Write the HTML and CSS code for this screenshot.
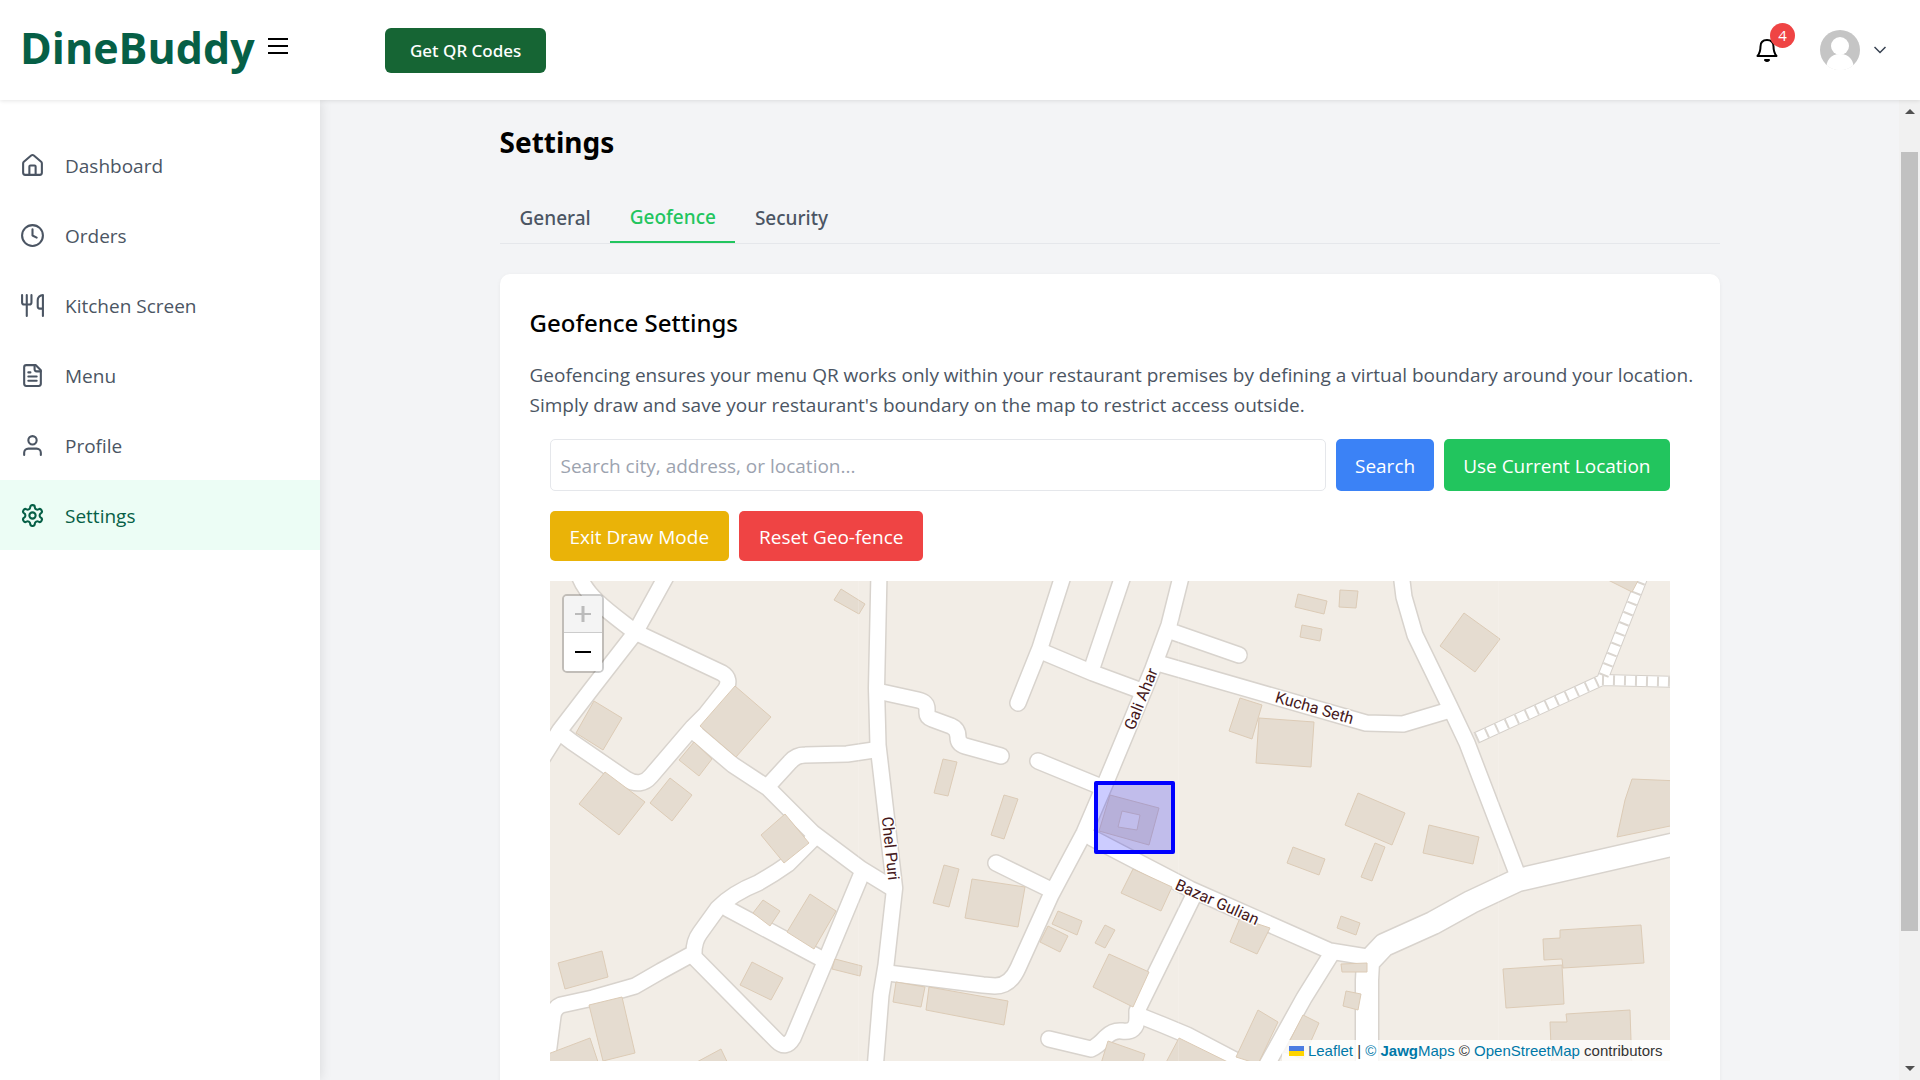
FILE: index.html
```html
<!DOCTYPE html>
<html lang="en">
<head>
<meta charset="utf-8">
<meta name="viewport" content="width=device-width, initial-scale=1">
<title>DineBuddy – Settings</title>
<link rel="stylesheet" href="styles.css">
</head>
<body>
<header class="topbar">
  <div class="brand">
    <span class="logo">DineBuddy</span>
    <button class="icon-btn menu-btn" type="button" aria-label="Toggle menu">
      <svg width="20" height="16" viewBox="0 0 20 16" stroke="currentColor" stroke-width="2"><path d="M0 1h20M0 8h20M0 15h20"/></svg>
    </button>
  </div>
  <button class="qr-btn" type="button">Get QR Codes</button>
  <div class="account">
    <button class="icon-btn bell-btn" type="button" aria-label="Notifications, 4 unread">
      <svg width="24" height="26" viewBox="0 0 24 26" fill="none" stroke="currentColor" stroke-width="2" stroke-linecap="round" stroke-linejoin="round"><path d="M2.500 19C5 16 5.500 13 5.500 9.500 5.500 5.500 8 3 12 3s6.500 2.500 6.500 6.500c0 3.500.5 6.500 3 9.500Z"/><path d="M10 23q2 2 4 0Z"/></svg>
      <span class="badge">4</span>
    </button>
    <button class="icon-btn user-btn" type="button" aria-label="Account">
      <svg width="40" height="40" viewBox="0 0 40 40"><defs><clipPath id="disc"><circle cx="20" cy="20" r="20"/></clipPath></defs><g clip-path="url(#disc)"><path fill="#c5c5c5" d="M0 0h40v40H0z"/><circle cx="20" cy="16" r="9" fill="#fff"/><path fill="#fff" d="M6 40c0-9 4-16 14-16s14 7 14 16z"/><path fill="#fff" d="M0 35h40v5H0z"/></g></svg>
      <svg class="chevron" width="12" height="8" viewBox="0 0 12 8" fill="none" stroke="currentColor" stroke-width="1.500"><path d="M.5 1 6 6.500 11.500 1"/></svg>
    </button>
  </div>
</header>

<div class="shell">
  <nav class="sidebar" aria-label="Main">
    <a class="nav-item" href="#"><svg class="nav-icon" viewBox="0 0 24 24"><path d="M15 21v-8a1 1 0 0 0-1-1h-4a1 1 0 0 0-1 1v8"/><path d="M3 10a2 2 0 0 1 .709-1.528l7-5.999a2 2 0 0 1 2.582 0l7 5.999A2 2 0 0 1 21 10v9a2 2 0 0 1-2 2H5a2 2 0 0 1-2-2z"/></svg>Dashboard</a>
    <a class="nav-item" href="#"><svg class="nav-icon" viewBox="0 0 24 24"><circle cx="12" cy="12" r="10"/><path d="M12 6v6l4 2"/></svg>Orders</a>
    <a class="nav-item" href="#"><svg class="nav-icon" viewBox="0 0 24 24"><path d="M2 2v7c0 1.100.9 2 2 2h5a2 2 0 0 0 2-2V2M6.500 2v20M22 15V2a5 5 0 0 0-5 5v6c0 1.100.9 2 2 2h3Zm0 0v7"/></svg>Kitchen Screen</a>
    <a class="nav-item" href="#"><svg class="nav-icon" viewBox="0 0 24 24"><path d="M15 2H6a2 2 0 0 0-2 2v16a2 2 0 0 0 2 2h12a2 2 0 0 0 2-2V7Z"/><path d="M14 2v4a2 2 0 0 0 2 2h4M10 9H8M16 13H8M16 17H8"/></svg>Menu</a>
    <a class="nav-item" href="#"><svg class="nav-icon" viewBox="0 0 24 24"><path d="M20 21v-2a4 4 0 0 0-4-4H8a4 4 0 0 0-4 4v2"/><circle cx="12" cy="7" r="4"/></svg>Profile</a>
    <a class="nav-item active" href="#" aria-current="page"><svg class="nav-icon" viewBox="0 0 24 24"><path d="M12.220 2h-.44a2 2 0 0 0-2 2v.18a2 2 0 0 1-1 1.730l-.43.25a2 2 0 0 1-2 0l-.15-.08a2 2 0 0 0-2.730.730l-.22.38a2 2 0 0 0 .73 2.730l.15.1a2 2 0 0 1 1 1.720v.51a2 2 0 0 1-1 1.740l-.15.09a2 2 0 0 0-.73 2.730l.22.38a2 2 0 0 0 2.730.730l.15-.08a2 2 0 0 1 2 0l.43.25a2 2 0 0 1 1 1.730V20a2 2 0 0 0 2 2h.44a2 2 0 0 0 2-2v-.18a2 2 0 0 1 1-1.730l.43-.25a2 2 0 0 1 2 0l.15.08a2 2 0 0 0 2.730-.73l.22-.39a2 2 0 0 0-.73-2.730l-.15-.08a2 2 0 0 1-1-1.740v-.5a2 2 0 0 1 1-1.740l.15-.09a2 2 0 0 0 .73-2.730l-.22-.38a2 2 0 0 0-2.730-.73l-.15.08a2 2 0 0 1-2 0l-.43-.25a2 2 0 0 1-1-1.730V4a2 2 0 0 0-2-2z"/><circle cx="12" cy="12" r="3"/></svg>Settings</a>
  </nav>

  <main class="content">
    <div class="container">
      <h1>Settings</h1>
      <div class="tabs" role="tablist">
        <button class="tab" type="button" role="tab">General</button>
        <button class="tab selected" type="button" role="tab" aria-selected="true">Geofence</button>
        <button class="tab" type="button" role="tab">Security</button>
      </div>
      <section class="card">
        <h2>Geofence Settings</h2>
        <p>Geofencing ensures your menu QR works only within your restaurant premises by defining a virtual boundary around your location. Simply draw and save your restaurant's boundary on the map to restrict access outside.</p>
        <div class="editor">
          <form class="row search-row">
            <input class="search" type="text" aria-label="Search location" placeholder="Search city, address, or location...">
            <button class="btn blue" type="button">Search</button>
            <button class="btn green" type="button">Use Current Location</button>
          </form>
          <div class="row draw-row">
            <button class="btn yellow" type="button">Exit Draw Mode</button>
            <button class="btn red" type="button">Reset Geo-fence</button>
          </div>
          <div class="map">
            <svg class="map-canvas" viewBox="550 581 1120 480" preserveAspectRatio="xMidYMid slice" role="img" aria-label="Street map with geofence">
              <defs>
                <g id="streets" fill="none" stroke-linecap="round" stroke-linejoin="round">
                  <path d="M579 575C586 597 612 614 635 632L722 673Q732 679 725 690L706 714 693 727 651 776Q641 788 626 779L572 742 559 732"/>
                  <path d="M668 573 641 622 635 633 593 687 560 730 543 757"/>
                  <path d="M693 731 733 765 768 788 813 833 861 869 892 888"/>
                  <path d="M768 786 790 762Q796 755 805 755L847 754 874 750"/>
                  <path d="M879 573 876.500 688 878 745 894.600 888 886 965 881 995 875 1070"/>
                  <path d="M877 691 918 700Q927 702 927 709V713Q927 717 932 719L951 726Q958 729 958 737 958 744 965 746L1001 756"/>
                  <path d="M1038 761 1099 786"/>
                  <path d="M1182 573 1169 625 1152 671 1108 777 1084 833 1051 895 1018 968Q1010 986 995 986L983 985 888 973"/>
                  <path d="M996 863 1047 888"/>
                  <path d="M1064 573 1040 648 1018 703"/>
                  <path d="M1043 652 1093 673 1139 690"/>
                  <path d="M1124 573 1092 668"/>
                  <path d="M1173 632 1239 655"/>
                  <path d="M1161 664 1366 723 1403 724 1450 710"/>
                  <path d="M1401 573 1404 597 1415 635 1449 705 1467 743 1518 876"/>
                  <path d="M1092 838 1140 863 1190 889 1330 951 1367 957"/>
                  <path d="M1332 953 1304 998 1264 1070"/>
                  <path d="M1195 893 1137 1011 1137 1018Q1137 1033 1122 1031 1113 1030 1106 1037 1098 1046 1091 1049L1049 1039"/>
                  <path d="M1138 1015 1163 1025 1187 1035 1250 1068"/>
                  <path d="M813 839 788 864Q774 874 758 883 733 893 718 908L700 933Q694 941 694 953L661 971 635 986 593 998 561 1005Q554 1008 553 1016L546 1070"/>
                  <path d="M694 957 777 1041Q786 1050 793 1038L825 962 862 873"/>
                  <path d="M728 909 820 958"/>
                </g>
                <g id="avenues" fill="none" stroke-linecap="round" stroke-linejoin="round">
                  <path d="M1680 843 1518 880 1471 902 1433 923 1384 945 1368 962 1367 980 1367 1070"/>
                </g>
                <path id="steps" fill="none" d="M1476 738 1602 680 1642 578M1602 680 1680 682"/>
              </defs>
              <path fill="#f2ede6" d="M540 570h1140v500H540z"/>
              <use href="#steps" stroke="#d5d0ca" stroke-width="12"/>
              <use href="#steps" stroke="#fff" stroke-width="10"/>
              <use href="#steps" stroke="#dad5cf" stroke-width="10" stroke-dasharray="2 9"/>
              <use href="#streets" stroke="#d8d3cd" stroke-width="18"/>
              <use href="#avenues" stroke="#d8d3cd" stroke-width="25"/>
              <use href="#streets" stroke="#fff" stroke-width="15"/>
              <use href="#avenues" stroke="#fff" stroke-width="22"/>
              <g fill="#e5dcd0" stroke="#dccbb6">
                <path d="M841 589 865 604 859 614 834 600zM735 686 771 717 736 757 700 726zM594 701 622 718 603 750 576 733zM605 772 645 802 619 835 579 804zM670 778 692 795 672 821 650 803zM694 742 712 759 699 776 679 760zM785 814 809 843 784 863 761 835zM763 900 780 911 770 926 753 913zM810 894 836 911 814 949 787 932zM752 962 783 978 771 1000 740 985zM835 959 862 966 860 976 832 969z"/>
                <path d="M558 963 602 951 608 977 565 989zM589 1005 622 997 635 1053 603 1061zM540 1057 590 1038 602 1074 540 1074zM695 1063 721 1049 731 1070zM943 759 957 762 948 796 934 793zM1004 795 1018 799 1004 839 991 835zM944 865 959 869 949 907 933 903zM972 879 1025 887 1018 927 965 918zM1058 911 1082 921 1077 935 1052 924zM1048 926 1068 936 1060 952 1040 942zM896 982 925 987 921 1007 893 1002zM929 987 1008 1001 1004 1025 926 1010z"/>
                <path d="M1133 869 1172 887 1161 911 1121 893zM1105 925 1115 930 1105 948 1095 943zM1109 954 1149 972 1133 1007 1093 987zM1240 918 1270 928 1257 954 1230 942zM1358 793 1405 813 1392 845 1345 825zM1375 843 1385 847 1372 881 1361 877zM1293 847 1325 859 1319 875 1287 863zM1341 916 1360 923 1356 935 1337 928zM1341 964 1367 963 1367 972 1342 972zM1346 991 1361 994 1358 1010 1343 1006zM1258 1010 1278 1022 1258 1064 1236 1057zM1303 1015 1319 1023 1303 1059 1284 1052zM1108 1041 1145 1054 1140 1070 1099 1070zM1179 1038 1240 1068 1162 1070z"/>
                <path d="M1560 930 1641 925 1644 963 1563 968 1562 959 1544 960 1543 939 1560 938zM1503 969 1562 965 1564 1004 1506 1008zM1550 1022 1567 1022 1566 1014 1630 1010 1632 1070 1552 1070zM1298 594 1327 601 1324 614 1295 607zM1340 590 1358 591 1356 608 1339 607zM1302 625 1322 629 1320 641 1300 637zM1464 613 1500 639 1475 672 1440 646zM1240 698 1262 705 1252 739 1229 731zM1259 718 1314 722 1311 767 1256 763zM1429 825 1479 837 1473 864 1423 853zM1632 779 1680 781 1680 824 1617 837 1625 800zM1602 577 1640 577 1632 592z"/>
                <path fill-rule="evenodd" d="M1110 795 1159 808 1149 845 1099 831zM1122 811 1140 815 1137 830 1118 827z"/>
              </g>
              <path stroke="#fff" stroke-opacity=".15" d="M858.500 581v480M1178.500 581v480M1498.500 581v480"/>
              <g class="street-name">
                <text transform="translate(1146 701) rotate(-68)">Gali Ahar</text>
                <text transform="translate(1313 713) rotate(16)">Kucha Seth</text>
                <text transform="translate(885 849) rotate(84)">Chel Puri</text>
                <text transform="translate(1215 907) rotate(24)">Bazar Gulian</text>
              </g>
              <rect x="1096" y="783" width="77" height="69" fill="#00f" fill-opacity=".2" stroke="#00f" stroke-width="4" stroke-linejoin="round"/>
            </svg>
            <div class="zoom">
              <button type="button" disabled aria-label="Zoom in"><svg width="16" height="16" viewBox="0 0 16 16" stroke="currentColor"><path stroke-width="3" d="M8 0v16"/><path stroke-width="2" d="M0 8h16"/></svg></button>
              <button type="button" aria-label="Zoom out"><svg width="16" height="16" viewBox="0 0 16 16" stroke="currentColor"><path stroke-width="2" d="M0 8h16"/></svg></button>
            </div>
            <div class="attribution">
              <svg width="15" height="10" viewBox="0 0 15 10"><path fill="#4c7be1" d="M0 0h15v5H0z"/><path fill="#ffd500" d="M0 5h15v5H0z"/></svg>
              <a href="#">Leaflet</a> | <a href="#">© <b>Jawg</b>Maps</a> © <a href="#">OpenStreetMap</a> contributors
            </div>
          </div>
        </div>
      </section>
    </div>
  </main>

  <div class="scrollbar" aria-hidden="true">
    <span class="arrow up"></span>
    <div class="track"><div class="thumb"></div></div>
    <span class="arrow down"></span>
  </div>
</div>
</body>
</html>
```
FILE: styles.css
```css
* { box-sizing: border-box; }

body {
  margin: 0;
  height: 100vh;
  display: flex;
  flex-direction: column;
  overflow: hidden;
  background: #fff;
  color: #000;
  font: 19px/30px "Open Sans", "Noto Sans", sans-serif;
}

button, input { font: inherit; color: inherit; }
button { border: 0; cursor: pointer; }
svg { display: block; flex: none; }
a { color: inherit; text-decoration: none; }
h1, h2, p { margin: 0; }

/* Noto Sans carries the medium weight that Open Sans lacks */
.qr-btn, .tab, h1, h2 { font-family: "Noto Sans", "Open Sans", sans-serif; }

/* Top bar */
.topbar {
  flex: none;
  height: 100px;
  display: flex;
  align-items: center;
  padding-right: 34px;
  background: #fff;
  box-shadow: 0 1px 4px rgba(0, 0, 0, .1);
  position: relative;
  z-index: 2;
}
.brand {
  width: 385px;
  display: flex;
  align-items: center;
  gap: 13px;
  padding-left: 20px;
}
.logo {
  padding-bottom: 4px;
  font-size: 43px;
  line-height: 60px;
  font-weight: 700;
  color: #065f46;
}
.icon-btn {
  display: flex;
  align-items: center;
  padding: 0;
  background: none;
}
.menu-btn { margin-bottom: 8px; }
.qr-btn {
  height: 45px;
  padding: 2px 25px 0;
  border-radius: 6px;
  background: #166534;
  color: #fff;
  font-size: 17px;
  font-weight: 500;
}
.account {
  margin-left: auto;
  display: flex;
  align-items: center;
  gap: 41px;
}
.bell-btn { position: relative; }
.badge {
  position: absolute;
  left: 15px;
  top: -14px;
  width: 25px;
  height: 25px;
  border-radius: 50%;
  background: #ef4444;
  color: #fff;
  font-size: 15px;
  line-height: 25px;
}
.user-btn { gap: 14px; color: #374151; }

/* Shell */
.shell { flex: 1; min-height: 0; display: flex; }
.sidebar {
  flex: none;
  width: 320px;
  padding-top: 30px;
  background: #fff;
  box-shadow: 0 0 12px rgba(0, 0, 0, .12);
  position: relative;
  z-index: 1;
}
.nav-item {
  display: flex;
  align-items: center;
  gap: 20px;
  height: 70px;
  padding: 1px 0 0 20px;
  color: #4b5563;
}
.nav-item.active { background: #ecfdf5; color: #065f46; }
.nav-icon {
  width: 25px;
  height: 25px;
  fill: none;
  stroke: currentColor;
  stroke-width: 2;
  stroke-linecap: round;
  stroke-linejoin: round;
}

.content { flex: 1; min-width: 0; overflow: hidden; background: #f3f4f6; }
.container { max-width: 1280px; margin: 0 auto; padding: 22px 30px; }
h1 { font-size: 28px; line-height: 40px; font-weight: 700; }

.tabs {
  display: flex;
  margin: 30px 0;
  border-bottom: 1px solid #e5e7eb;
}
.tab {
  height: 51px;
  padding: 0 19px 0 20px;
  background: none;
  color: #4b5563;
  font-weight: 500;
}
.tab.selected { color: #22c55e; border-bottom: 2px solid #22c55e; }

.card {
  padding: 30px;
  border-radius: 10px;
  background: #fff;
  box-shadow: 0 1px 4px rgba(0, 0, 0, .05);
}
h2 { margin-bottom: 18px; font-size: 24px; line-height: 38px; font-weight: 500; }
p { margin-right: -20px; color: #4b5563; }
.editor { display: flex; flex-direction: column; gap: 20px; padding: 19px 20px 20px; }
.row { display: flex; gap: 10px; }
.search {
  flex: 1;
  min-width: 0;
  height: 52px;
  padding: 1px 10px 0;
  border: 1px solid #e5e7eb;
  border-radius: 5px;
  background: #fff;
}
.search::placeholder { color: #9ca3af; opacity: 1; }
.btn {
  min-height: 50px;
  padding: 1px 20px 0;
  border-radius: 5px;
  color: #fff;
}
.search-row .btn { padding: 1px 19px 0; }
.blue { background: #3b82f6; }
.green { background: #22c55e; }
.yellow { background: #eab308; }
.red { background: #ef4444; }

/* Map */
.map { position: relative; height: 480px; overflow: hidden; background: #f2ede6; }
.map-canvas { width: 100%; height: 100%; }
.street-name {
  font: 16px Roboto, sans-serif;
  fill: #46191c;
  stroke: #fff;
  stroke-width: 3px;
  stroke-linejoin: round;
  paint-order: stroke;
  text-anchor: middle;
}
.zoom {
  position: absolute;
  left: 12px;
  top: 13px;
  width: 42px;
  border: 2px solid rgba(0, 0, 0, .2);
  border-radius: 5px;
  background-clip: padding-box;
}
.zoom button {
  display: flex;
  align-items: center;
  justify-content: center;
  width: 100%;
  height: 38px;
  padding: 0;
  background: #fff;
  color: #000;
}
.zoom button:first-child {
  height: 37px;
  border-bottom: 1px solid #ccc;
  border-radius: 3px 3px 0 0;
}
.zoom button:last-child { border-radius: 0 0 3px 3px; }
.zoom button:disabled { background: #f4f4f4; color: #bbb; }
.attribution {
  position: absolute;
  right: 0;
  bottom: 0;
  display: block;
  padding: 0 7px;
  background: rgba(255, 255, 255, .8);
  color: #333;
  font: 15px/21px "Liberation Sans", sans-serif;
}
.attribution svg { display: inline-block; }
.attribution a { color: #0078a8; }

/* Scrollbar */
.scrollbar {
  flex: none;
  width: 21px;
  display: flex;
  flex-direction: column;
  align-items: center;
  padding: 9px 0;
  background: #f1f1f1;
}
.arrow { border: 5px solid transparent; }
.up { border-top: 0; border-bottom-color: #505050; }
.down { border-bottom: 0; border-top-color: #505050; }
.track { flex: 1; width: 17px; padding: 38px 0 135px; }
.thumb { height: 100%; background: #c1c1c1; }
```
